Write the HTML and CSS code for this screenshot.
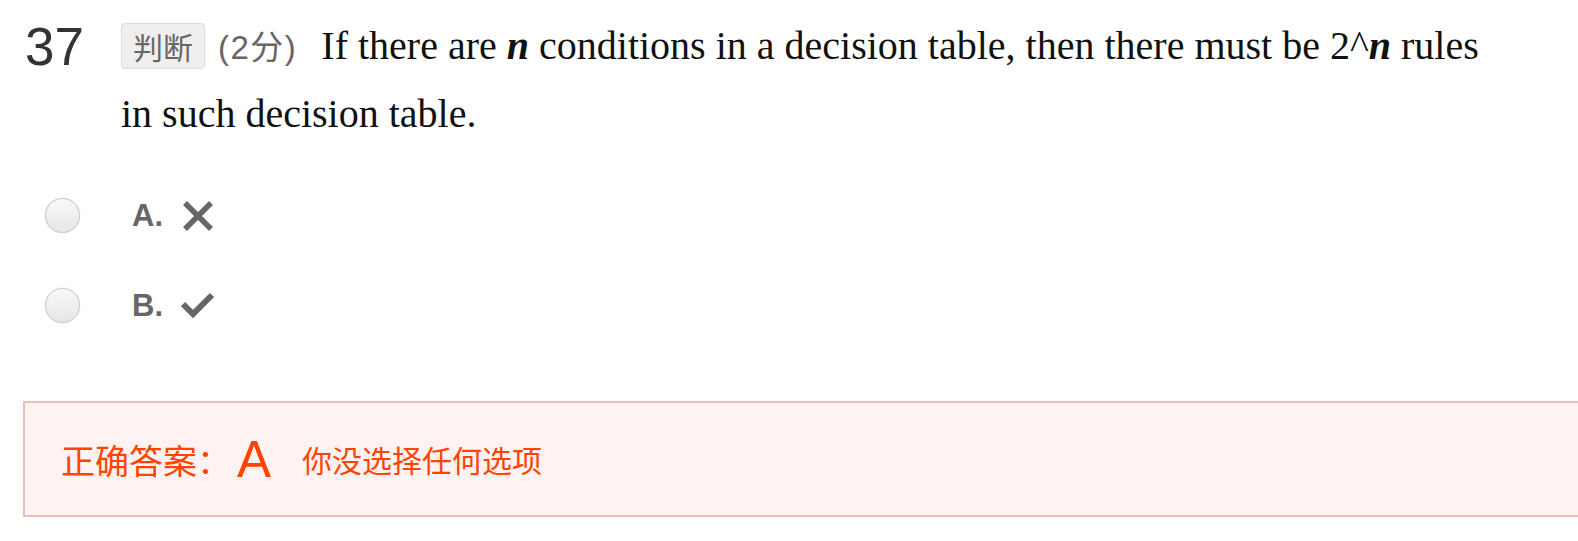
FILE: index.html
```html
<!DOCTYPE html>
<html lang="zh">
<head>
<meta charset="utf-8">
<link rel="stylesheet" href="styles.css">
</head>
<body>
<div class="page">
  <div class="question">
    <div class="num">37</div>
    <div class="stem">
      <span class="tag">判断</span><span class="score">(2分)</span>If there are <b><i>n</i></b> conditions in a decision table, then there must be 2^<b><i>n</i></b> rules in such decision table.
    </div>
  </div>
  <div class="options">
    <label class="option">
      <span class="radio"></span>
      <span class="letter">A.</span>
      <svg class="icon" viewBox="0 0 34 34" width="34" height="34"><path d="M4 4 L30 30 M30 4 L4 30" stroke="#666" stroke-width="5.5" stroke-linecap="butt" fill="none"/></svg>
    </label>
    <label class="option">
      <span class="radio"></span>
      <span class="letter">B.</span>
      <svg class="icon" viewBox="0 0 34 34" width="34" height="34"><path d="M2 15 L12 25 L31 6" stroke="#666" stroke-width="6" stroke-linejoin="miter" fill="none"/></svg>
    </label>
  </div>
  <div class="answer">
    <span class="ans-label">正确答案：</span><span class="ans-letter">A</span><span class="ans-note">你没选择任何选项</span>
  </div>
</div>
</body>
</html>
```
FILE: styles.css
```css
html, body {
  margin: 0;
  padding: 0;
  background: #fff;
}
.page {
  width: 1578px;
  height: 541px;
  overflow: hidden;
}
.question {
  display: flex;
  align-items: flex-start;
}
.num {
  padding-left: 25px;
  box-sizing: border-box;
  flex: 0 0 121px;
  font-family: "Liberation Sans", Arial, sans-serif;
  font-size: 53px;
  line-height: 66px;
  color: #333;
  padding-top: 14px;
}
.stem {
  width: 1370px;
  padding-top: 13px;
  font-family: "Liberation Serif", "Times New Roman", serif;
  font-size: 40px;
  line-height: 66px;
  color: #111;
}
.tag {
  display: inline-block;
  vertical-align: top;
  margin-top: 10px;
  height: 44px;
  line-height: 44px;
  padding: 0 11px;
  border: 1px solid #dcdcdc;
  border-radius: 4px;
  background: #efefef;
  color: #666;
  font-family: "Noto Sans CJK SC", sans-serif;
  font-size: 30px;
}
.score {
  font-family: "Liberation Sans", "Noto Sans CJK SC", sans-serif;
  font-size: 33px;
  letter-spacing: 1.5px;
  color: #666;
  margin-left: 13px;
  margin-right: 24px;
}
.options {
  padding-top: 51px;
  padding-left: 45px;
  display: flex;
  flex-direction: column;
  gap: 55px;
}
.option {
  display: flex;
  align-items: center;
  height: 35px;
}
.radio {
  width: 33px;
  height: 33px;
  border-radius: 50%;
  border: 1px solid #c8c8c8;
  background: linear-gradient(#f9f9f9, #e6e6e6);
  box-shadow: 0 0 1px #bbb;
}
.letter {
  margin-left: 52px;
  font-family: "Liberation Sans", Arial, sans-serif;
  font-weight: bold;
  font-size: 31px;
  color: #666;
  width: 49px;
}
.icon {
  display: block;
}
.answer {
  margin-top: 78px;
  margin-left: 23px;
  width: 1600px;
  height: 112px;
  border: 2px solid #f5b9b9;
  background: #fff2f2;
  display: flex;
  align-items: center;
  padding-left: 36px;
  box-sizing: content-box;
  color: #ff4400;
  font-family: "Noto Sans CJK SC", sans-serif;
}
.ans-label {
  font-size: 34px;
}
.ans-letter {
  font-family: "Liberation Sans", Arial, sans-serif;
  font-size: 51px;
  margin-left: 6px;
  margin-right: 31px;
}
.ans-note {
  font-size: 30px;
}
```
